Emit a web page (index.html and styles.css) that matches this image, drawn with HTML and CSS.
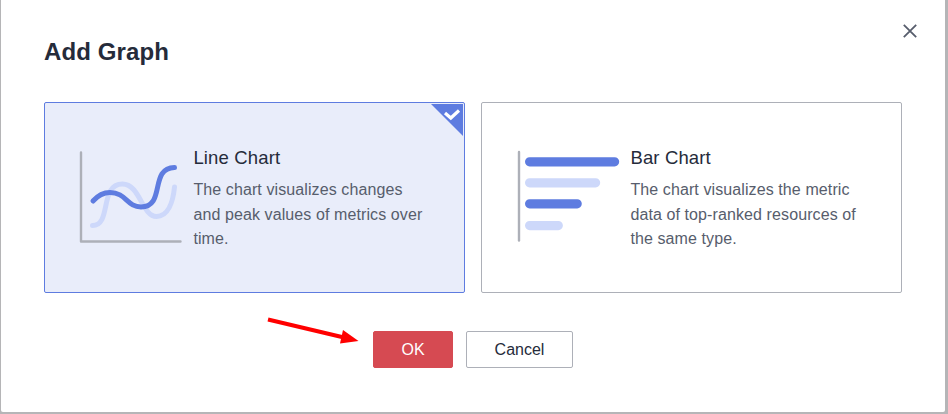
FILE: index.html
```html
<!DOCTYPE html>
<html lang="en">
<head>
<meta charset="utf-8">
<title>Add Graph</title>
<link rel="stylesheet" href="styles.css">
</head>
<body>
<main class="dialog">
  <header class="header">
    <h1 class="title">Add Graph</h1>
    <button class="close" aria-label="Close">
      <svg width="14" height="14" viewBox="0 0 14 14"><path d="M.8.8 13.2 13.2M13.2.8.8 13.2"/></svg>
    </button>
  </header>
  <div class="cards">
    <section class="card selected">
      <svg class="chart-icon" width="104" height="96" viewBox="78 149 104 96">
        <path class="axis" d="M81 152.500V241.500H180.500"/>
        <path class="stroke light" d="M92.500 225.500C112 225.500 99 184 122.500 184C140 184 142 216.500 156.500 216.500C168 216.500 173 202 174.500 187"/>
        <path class="stroke blue" d="M93 201C97 196.500 102 192.500 110 192.500C126 192.500 127 207 141 207C166 207 149 168 174.500 167.500"/>
      </svg>
      <div class="info">
        <h2 class="name">Line Chart</h2>
        <p class="desc">The chart visualizes changes<br>and peak values of metrics over<br>time.</p>
      </div>
      <svg class="badge" width="32" height="32" viewBox="0 0 32 32">
        <path class="corner" d="M0 0H32V32Z"/>
        <path class="tick" d="M14 9 19.800 14 28 6.500"/>
      </svg>
    </section>
    <section class="card">
      <svg class="chart-icon" width="104" height="96" viewBox="515 149 104 96">
        <path class="axis" d="M519 152V240.500"/>
        <path class="bar blue" d="M529.600 161.800H614.600M529.600 203.800H577.200"/>
        <path class="bar light" d="M529.600 182.800H595.600M529.600 225.600H558.300"/>
      </svg>
      <div class="info">
        <h2 class="name">Bar Chart</h2>
        <p class="desc">The chart visualizes the metric<br>data of top-ranked resources of<br>the same type.</p>
      </div>
    </section>
  </div>
  <footer class="actions">
    <button class="btn primary">OK</button>
    <button class="btn">Cancel</button>
  </footer>
  <svg class="pointer" width="92" height="28" viewBox="267 317 92 28">
    <path class="shaft" d="M268 319.500 344 337.500"/>
    <path class="head" d="M343 330 358.500 341 340 343.500Z"/>
  </svg>
</main>
</body>
</html>
```
FILE: styles.css
```css
* { box-sizing: border-box; }
body {
  margin: 0;
  height: 414px;
  padding: 0 3px 2px 1px;
  overflow: hidden;
  background: #b5b5b7;
  font-family: "Liberation Sans", Arial, sans-serif;
  color: #252b3a;
}
.dialog {
  position: relative;
  height: 412px;
  padding: 0 43px;
  background: #fff;
  border-radius: 0 0 2px 2px;
}
.header {
  display: flex;
  justify-content: space-between;
  height: 102px;
}
.title {
  margin: 36px 0 0;
  font-size: 24px;
  line-height: 32px;
  letter-spacing: .1px;
}
.close {
  width: 14px;
  height: 14px;
  margin: 24px -15px 0 0;
  padding: 0;
  border: 0;
  background: none;
}
.close svg { display: block; fill: none; stroke: #575d6c; stroke-width: 1.8; }
.cards {
  display: grid;
  grid-template-columns: 421px 421px;
  gap: 16px;
}
.card {
  position: relative;
  display: flex;
  height: 191px;
  padding: 42px 0 0 33px;
  border: 1px solid #adb0b8;
  border-radius: 2px;
}
.selected { background: #e9edfa; border-color: #5e7ce0; }
.chart-icon { flex: none; margin-top: 4px; overflow: visible; }
.chart-icon path { fill: none; stroke-linecap: round; stroke-linejoin: round; }
.chart-icon .axis { stroke: #adb0b8; stroke-width: 2.4; }
.chart-icon .stroke { stroke-width: 5; }
.chart-icon .bar { stroke-width: 9.2; }
.blue { stroke: #5e7ce0; }
.light { stroke: #cdd8fa; }
.info { margin-left: 11.4px; }
.name {
  margin: 0;
  font-size: 18.5px;
  font-weight: 400;
  line-height: 26px;
  letter-spacing: .15px;
}
.desc {
  margin: 7px 0 0;
  color: #575d6c;
  font-size: 16px;
  line-height: 24.5px;
  letter-spacing: .1px;
  white-space: nowrap;
}
.badge { position: absolute; top: 1px; right: 1px; }
.corner { fill: #5e7ce0; }
.tick { fill: none; stroke: #fff; stroke-width: 3.2; }
.actions {
  display: flex;
  justify-content: center;
  gap: 13px;
  margin-top: 38px;
}
.btn {
  width: 107px;
  height: 37px;
  padding: 0;
  border: 1px solid #adb0b8;
  border-radius: 2px;
  background: #fff;
  color: #252b3a;
  font: 16px "Liberation Sans", Arial, sans-serif;
}
.primary { width: 80px; border-color: #d64a52; background: #d64a52; color: #fff; }
.pointer { position: absolute; left: 266px; top: 317px; }
.shaft { fill: none; stroke: #f00; stroke-width: 4; }
.head { fill: #f00; }
```
